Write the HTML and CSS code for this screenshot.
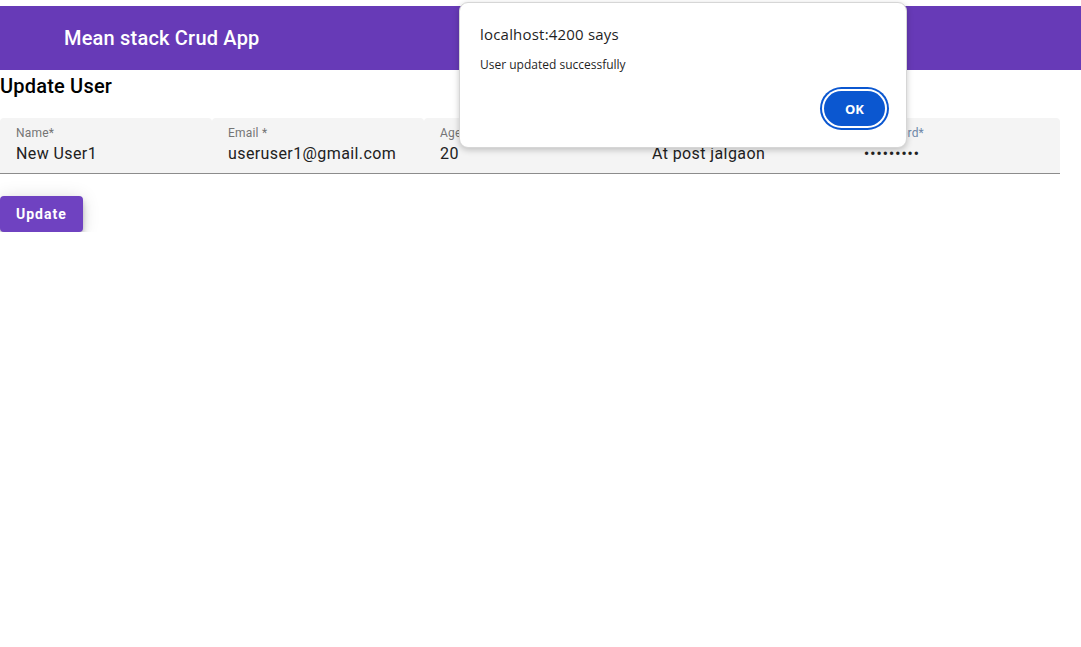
FILE: index.html
```html
<!DOCTYPE html>
<html lang="en">
<head>
<meta charset="utf-8">
<title>Mean stack Crud App</title>
<link rel="stylesheet" href="styles.css">
</head>
<body>
<header class="toolbar">
  <span class="brand">Mean stack Crud App</span>
</header>
<main class="content">
  <h2 class="page-title">Update User</h2>
  <form class="form-row">
    <div class="field"><label class="field-label">Name*</label><div class="field-value">New User1</div></div>
    <div class="field"><label class="field-label">Email *</label><div class="field-value">useruser1@gmail.com</div></div>
    <div class="field"><label class="field-label">Age*</label><div class="field-value">20</div></div>
    <div class="field"><label class="field-label">Address*</label><div class="field-value">At post jalgaon</div></div>
    <div class="field"><label class="field-label pw">Password*</label><div class="field-value dots">•••••••••</div></div>
  </form>
  <button class="btn-update" type="button">Update</button>
</main>
<div class="alert" role="dialog">
  <div class="alert-title">localhost:4200 says</div>
  <div class="alert-msg">User updated successfully</div>
  <div class="alert-actions"><button class="alert-ok" type="button">OK</button></div>
</div>
</body>
</html>
```
FILE: styles.css
```css
html, body {
  margin: 0;
  padding: 0;
  background: #fff;
}
body {
  font-family: Roboto, "Liberation Sans", sans-serif;
  padding-top: 6px;
  position: relative;
}
.toolbar {
  height: 64px;
  background: #673ab7;
  display: flex;
  align-items: center;
  padding-left: 64px;
}
.brand {
  color: #fff;
  font-size: 20px;
  font-weight: 500;
  letter-spacing: 0.2px;
}
.content {
  display: flex;
  flex-direction: column;
  align-items: flex-start;
}
.page-title {
  margin: 0;
  font-size: 20px;
  font-weight: 500;
  line-height: 32px;
  color: #000;
  letter-spacing: 0.2px;
}
.form-row {
  margin-top: 16px;
  display: flex;
  width: 1060px;
}
.field {
  width: 212px;
  box-sizing: border-box;
  height: 56px;
  background: #f4f4f4;
  border-radius: 4px 4px 0 0;
  border-bottom: 1px solid #8c8c8c;
  padding: 7px 16px 0;
  display: flex;
  flex-direction: column;
}
.field-label {
  font-size: 12px;
  line-height: 16px;
  color: #757575;
  letter-spacing: 0.2px;
}
.field-label.pw {
  color: #6f88a8;
}
.field-value {
  font-size: 16px;
  line-height: 24px;
  color: #212121;
  letter-spacing: 0.4px;
  margin-top: 1px;
}
.field-value.dots {
  font-size: 14px;
  letter-spacing: 1.2px;
  font-weight: 700;
}
.btn-update {
  margin-top: 22px;
  height: 36px;
  padding: 0 16px;
  background: #6f42c1;
  color: #fff;
  border: none;
  border-radius: 4px;
  font-family: Roboto, "Liberation Sans", sans-serif;
  font-size: 14px;
  font-weight: 700;
  letter-spacing: 1px;
  box-shadow: 0 3px 5px -1px rgba(0,0,0,.2), 0 6px 10px 0 rgba(0,0,0,.14), 0 1px 18px 0 rgba(0,0,0,.12);
}
.alert {
  position: absolute;
  left: 459px;
  top: 2px;
  width: 448px;
  height: 146px;
  box-sizing: border-box;
  background: #fff;
  border: 1px solid #d6d6d6;
  border-radius: 9px;
  box-shadow: 0 2px 6px rgba(0,0,0,.22);
  padding: 20px 17px 17px 20px;
  display: flex;
  flex-direction: column;
  font-family: "Open Sans", "Noto Sans", sans-serif;
}
.alert-title {
  font-size: 15px;
  font-weight: 500;
  color: #1f1f1f;
  line-height: 22px;
  letter-spacing: 0.2px;
}
.alert-msg {
  margin-top: 12px;
  font-size: 12px;
  color: #1f1f1f;
  line-height: 16px;
}
.alert-actions {
  margin-top: auto;
  display: flex;
  justify-content: flex-end;
}
.alert-ok {
  width: 61px;
  height: 35px;
  margin: 4px;
  border: none;
  border-radius: 18px;
  background: #0b57d0;
  color: #fff;
  font-family: "Open Sans", "Noto Sans", sans-serif;
  font-size: 13px;
  font-weight: 700;
  box-shadow: 0 0 0 2px #fff, 0 0 0 4px #0b57d0;
}
```
